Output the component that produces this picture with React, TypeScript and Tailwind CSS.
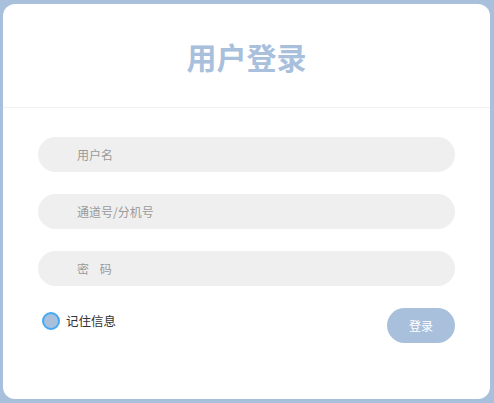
const Field = (props: { placeholder: string }) => {
  return (
    <div className="h-[35px] w-full rounded-full bg-[#efefef] pl-[39px] flex items-center">
      <span className="text-[12px] text-[#9a9a9a] whitespace-pre">{props.placeholder}</span>
    </div>
  );
};

const App = () => {
  return (
    <div
      className="w-[494px] h-[403px] bg-[#a8c0dc] pt-[4px] pl-[3px] pr-[4px] pb-[4px]"
      style={{ fontFamily: '"Noto Sans CJK SC", "Noto Sans", sans-serif' }}
    >
      <div className="h-full w-full bg-white rounded-[12px] flex flex-col">
        <div className="h-[104px] flex items-center justify-center border-b border-[#f0f0f0]">
          <h1 className="text-[30px] font-bold text-[#a8c0dc] leading-none">用户登录</h1>
        </div>
        <div className="px-[35px] pt-[29px] flex flex-col gap-[22px]">
          <Field placeholder="用户名" />
          <Field placeholder="通道号/分机号" />
          <Field placeholder="密    码" />
        </div>
        <div className="px-[35px] pt-[22px] flex items-start justify-between">
          <label className="flex items-center gap-[6px] pl-[4px] pt-[4px]">
            <span className="w-[18px] h-[18px] rounded-full bg-[#a8c0dc] border-2 border-[#44a8f2]" />
            <span className="text-[12.5px] text-[#333]">记住信息</span>
          </label>
          <button className="w-[68px] h-[35px] rounded-full bg-[#a8c0dc] text-white text-[12px]">登录</button>
        </div>
      </div>
    </div>
  );
};

export default App;
